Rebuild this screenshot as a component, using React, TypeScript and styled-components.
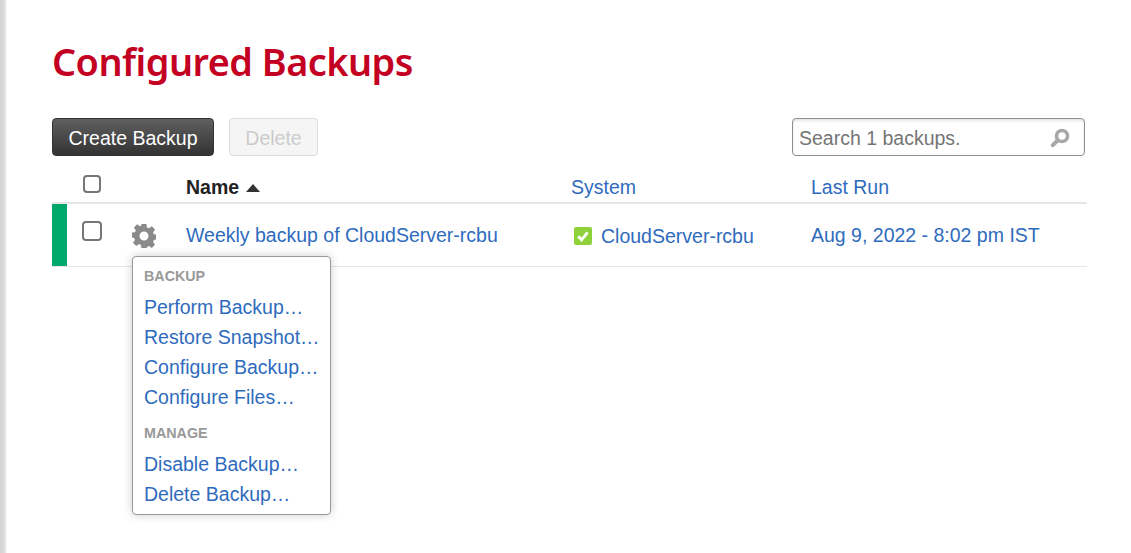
import React from "react";
import styled, { createGlobalStyle } from "styled-components";

const Global = createGlobalStyle`
  html, body { margin: 0; padding: 0; background: #fff; height: 100%; overflow: hidden; }
  body { font-family: "Liberation Sans", Arial, sans-serif; font-size: 19.5px; color: #222; }
  a { color: #2f6bbd; text-decoration: none; }
`;

const Shell = styled.div`
  display: flex;
  height: 553px;
`;
const EdgeShadow = styled.div`
  flex: 0 0 7px;
  background: linear-gradient(90deg, #d2d2d2 0%, #dcdcdc 60%, #f2f2f2 90%, #fff 100%);
`;
const Main = styled.main`
  flex: 1;
  padding: 37px 44px 0 45px;
  min-width: 0;
`;
const Title = styled.h1`
  margin: 0 0 31px;
  font-family: "Noto Sans", sans-serif;
  font-weight: 600;
  font-size: 37.8px;
  letter-spacing: -0.5px;
  line-height: 50px;
  color: #c40022;
`;
const Toolbar = styled.div`
  display: flex;
  align-items: center;
  gap: 15px;
  height: 38px;
  padding-right: 2px;
`;
const PrimaryButton = styled.button`
  height: 38px;
  width: 162px;
  padding: 2px 0 0;
  border: 1px solid #333;
  border-radius: 4px;
  color: #fff;
  font: 19.5px "Liberation Sans", sans-serif;
  background: linear-gradient(#5f5f5f, #333);
`;
const DisabledButton = styled.button`
  height: 38px;
  width: 89px;
  padding: 2px 0 0;
  border: 1px solid #ddd;
  border-radius: 4px;
  color: #ccc;
  font: 19.5px "Liberation Sans", sans-serif;
  background: #f5f5f5;
`;
const SearchBox = styled.div`
  margin-left: auto;
  width: 293px;
  height: 38px;
  box-sizing: border-box;
  display: flex;
  align-items: center;
  justify-content: space-between;
  padding: 2px 14px 0 6px;
  border: 1px solid #8f8f8f;
  border-radius: 4px;
  box-shadow: inset 0 2px 3px rgba(0, 0, 0, 0.1);
  color: #757575;
`;
const columns = "grid-template-columns: 15px 119px 385px 240px 1fr;";
const HeaderRow = styled.div`
  display: grid;
  ${columns}
  height: 48px;
  padding-bottom: 3px;
  align-items: end;
  border-bottom: 2px solid #e6e6e6;
  box-sizing: border-box;
`;
const DataRow = styled.div`
  display: grid;
  ${columns}
  height: 63px;
  align-items: center;
  border-bottom: 1px solid #e6e6e6;
  box-sizing: border-box;
  position: relative;
`;
const StatusBar = styled.div`
  align-self: stretch;
  background: #00a96b;
`;
const CheckCell = styled.div`
  display: flex;
  align-items: center;
  padding-left: 15px;
  gap: 30px;
`;
const Box = styled.span<{ $size?: number }>`
  display: block;
  flex: none;
  width: ${(p) => p.$size ?? 18}px;
  height: ${(p) => p.$size ?? 18}px;
  box-sizing: border-box;
  border: 2px solid #767676;
  border-radius: 4px;
  background: #fff;
`;
const HeaderBox = styled(Box)`
  margin: 0 0 6px 1px;
`;
const DataBox = styled(Box)`
  margin-top: -8px;
`;
const SortLabel = styled.div`
  display: flex;
  align-items: center;
  gap: 7px;
  font-weight: 700;
  color: #222;
`;
const HeaderLink = styled.a`
  display: block;
`;
const CellLink = styled.a<{ $nudge?: number; $indent?: number }>`
  display: flex;
  align-items: center;
  gap: 9px;
  margin-top: ${(p) => p.$nudge ?? 0}px;
  margin-left: ${(p) => p.$indent ?? 0}px;
`;
const GearWrap = styled.span`
  display: block;
  margin-top: 2px;
  height: 24px;
`;
const Menu = styled.div`
  position: absolute;
  left: 80px;
  top: 52px;
  width: 199px;
  height: 259px;
  box-sizing: border-box;
  padding: 11px 11px 0;
  background: #fff;
  border: 1px solid #999;
  border-radius: 4px;
  box-shadow: 0 0 10px rgba(0, 0, 0, 0.2);
  z-index: 2;
`;
const MenuHeading = styled.div<{ $gap?: number }>`
  margin-top: ${(p) => p.$gap ?? 0}px;
  font-size: 14.3px;
  line-height: 17px;
  font-weight: 700;
  color: #999;
  margin-bottom: 7px;
`;
const MenuItem = styled.a`
  display: block;
  line-height: 30px;
  white-space: nowrap;
`;

const Gear = () => (
  <svg width="24" height="24" viewBox="0 0 24 24" fill="#8a8a8a">
    <path
      fillRule="evenodd"
      d="M9.6 0h4.8l.6 3.4 1.9.8 2.9-1.9 3.2 3.2-1.9 2.9.8 1.9 3.1.3v4.8l-3.1.6-.8 1.9 1.9 2.9-3.2 3.2-2.9-1.9-1.9.8-.6 3.1H9.6L9 20.9l-1.9-.8-2.9 1.9L1 18.8l1.9-2.9-.8-1.9-2.1-.6V8.6l3-.3.8-1.9L1.9 3.5 5.1.3 8 2.2l1-.4zM12 7.5a4.5 4.5 0 1 0 0 9 4.5 4.5 0 0 0 0-9z"
    />
  </svg>
);
const SearchIcon = () => (
  <svg width="20" height="20" viewBox="0 0 20 20">
    <circle cx="12" cy="8" r="5.5" fill="none" stroke="#a8a8a8" strokeWidth="3.6" />
    <path d="M7.5 12.5L2.8 17.2" stroke="#a8a8a8" strokeWidth="4" strokeLinecap="round" />
  </svg>
);
const StatusOk = () => (
  <svg width="18" height="18" viewBox="0 0 18 18">
    <rect width="18" height="18" rx="2" fill="#8fd13a" />
    <path d="M4.2 9.3l3.4 3.5 6-7.5" fill="none" stroke="#fff" strokeWidth="2.8" />
  </svg>
);
const SortUp = () => (
  <svg width="14" height="8" viewBox="0 0 14 8">
    <path d="M7 0l7 8H0z" fill="#333" />
  </svg>
);

export default function App() {
  return (
    <Shell>
      <Global />
      <EdgeShadow />
      <Main>
        <Title>Configured Backups</Title>
        <Toolbar>
          <PrimaryButton>Create Backup</PrimaryButton>
          <DisabledButton disabled>Delete</DisabledButton>
          <SearchBox>
            Search 1 backups.
            <SearchIcon />
          </SearchBox>
        </Toolbar>
        <HeaderRow>
          <span />
          <CheckCell>
            <HeaderBox />
          </CheckCell>
          <SortLabel>
            Name <SortUp />
          </SortLabel>
          <HeaderLink href="#">System</HeaderLink>
          <HeaderLink href="#">Last Run</HeaderLink>
        </HeaderRow>
        <DataRow>
          <StatusBar />
          <CheckCell>
            <DataBox $size={20} />
            <GearWrap>
              <Gear />
            </GearWrap>
          </CheckCell>
          <CellLink href="#">Weekly backup of CloudServer-rcbu</CellLink>
          <CellLink href="#" $indent={3} $nudge={2}>
            <StatusOk />
            CloudServer-rcbu
          </CellLink>
          <CellLink href="#">Aug 9, 2022 - 8:02 pm IST</CellLink>
          <Menu>
            <MenuHeading>BACKUP</MenuHeading>
            <MenuItem href="#">Perform Backup…</MenuItem>
            <MenuItem href="#">Restore Snapshot…</MenuItem>
            <MenuItem href="#">Configure Backup…</MenuItem>
            <MenuItem href="#">Configure Files…</MenuItem>
            <MenuHeading $gap={13}>MANAGE</MenuHeading>
            <MenuItem href="#">Disable Backup…</MenuItem>
            <MenuItem href="#">Delete Backup…</MenuItem>
          </Menu>
        </DataRow>
      </Main>
    </Shell>
  );
}
